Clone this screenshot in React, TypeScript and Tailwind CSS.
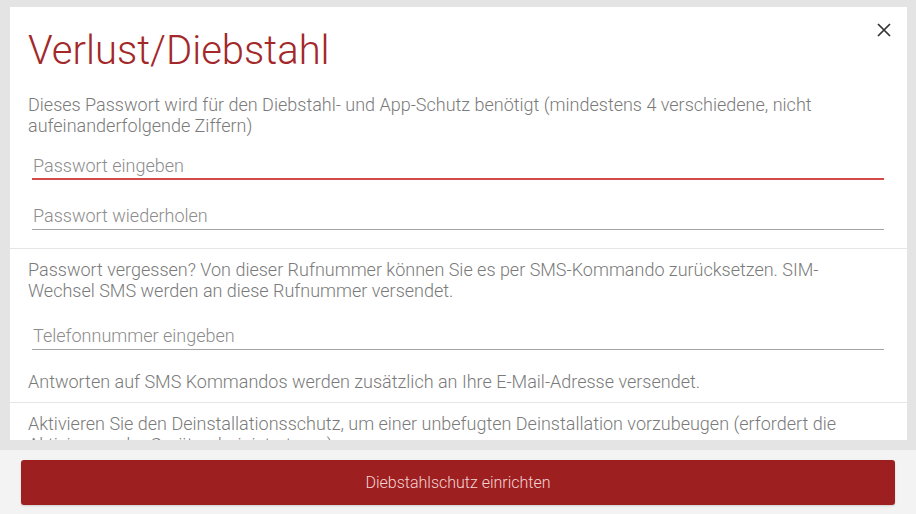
import { useState } from "react";

const roboto = { fontFamily: "Roboto, 'Noto Sans', sans-serif" };

const textClass = "text-[18px] leading-[21px] font-light text-[#7a7a7a]";
const inputClass =
  "block w-full bg-transparent px-[1px] pb-[3px] text-[18px] leading-[21px] font-light text-[#444] placeholder:text-[#8c8c8c] outline-none border-b border-[#a3a3a3]";
const focusedClass =
  "block w-full bg-transparent px-[1px] pb-[2px] text-[18px] leading-[21px] font-light text-[#444] placeholder:text-[#8c8c8c] outline-none border-b-2 border-[#d24a4a]";

export default function App() {
  const [password, setPassword] = useState("");
  const [repeat, setRepeat] = useState("");
  const [phone, setPhone] = useState("");

  return (
    <div style={roboto} className="flex h-[514px] w-full flex-col overflow-hidden bg-[#e4e4e4]">
      <div className="relative ml-[10px] mr-[9px] mt-[7px] h-[433px] shrink-0 overflow-hidden bg-white">
        <button className="absolute right-[15px] top-[15px] p-[1px] text-[#333]" aria-label="Schließen">
          <svg width="14" height="14" viewBox="0 0 14 14" fill="none" stroke="currentColor" strokeWidth="1.7">
            <path d="M1 1L13 13M13 1L1 13" />
          </svg>
        </button>

        <section className="pt-[20px]">
          <h1 className="px-[18px] text-[40px] leading-[48px] font-light text-[#a3282a]">Verlust/Diebstahl</h1>
          <p className={`mt-[19px] pl-[18px] pr-[23px] ${textClass}`}>
            Dieses Passwort wird für den Diebstahl- und App-Schutz benötigt (mindestens 4 verschiedene, nicht
            aufeinanderfolgende Ziffern)
          </p>
          <div className="mt-[19px] pl-[22px] pr-[23px]">
            <input
              type="password"
              value={password}
              onChange={(e) => setPassword(e.target.value)}
              placeholder="Passwort eingeben"
              className={focusedClass}
            />
          </div>
          <div className="mt-[25px] pl-[22px] pr-[23px] pb-[18px]">
            <input
              type="password"
              value={repeat}
              onChange={(e) => setRepeat(e.target.value)}
              placeholder="Passwort wiederholen"
              className={inputClass}
            />
          </div>
        </section>

        <section className="border-t border-[#e6e6e6] pt-[10px]">
          <p className={`pl-[18px] pr-[23px] ${textClass}`}>
            Passwort vergessen? Von dieser Rufnummer können Sie es per SMS-Kommando zurücksetzen. SIM-Wechsel SMS
            werden an diese Rufnummer versendet.
          </p>
          <div className="mt-[24px] pl-[22px] pr-[23px]">
            <input
              type="tel"
              value={phone}
              onChange={(e) => setPhone(e.target.value)}
              placeholder="Telefonnummer eingeben"
              className={inputClass}
            />
          </div>
          <p className={`mt-[21px] pl-[18px] pr-[23px] pb-[10px] ${textClass}`}>
            Antworten auf SMS Kommandos werden zusätzlich an Ihre E-Mail-Adresse versendet.
          </p>
        </section>

        <section className="border-t border-[#e6e6e6] pt-[10px]">
          <p className={`pl-[18px] pr-[23px] ${textClass}`}>
            Aktivieren Sie den Deinstallationsschutz, um einer unbefugten Deinstallation vorzubeugen (erfordert die
            Aktivierung der Geräteadministratoren)
          </p>
        </section>
      </div>

      <div className="mt-[10px] flex-1 bg-[#f3f3f3] pl-[21px] pr-[21px] pt-[10px]">
        <button className="flex h-[45px] w-full items-center justify-center rounded-[3px] bg-[#9e1f20] text-[16px] font-light text-[#f2d4d4] shadow-[0_1px_2px_rgba(0,0,0,0.15)]">
          Diebstahlschutz einrichten
        </button>
      </div>
    </div>
  );
}
